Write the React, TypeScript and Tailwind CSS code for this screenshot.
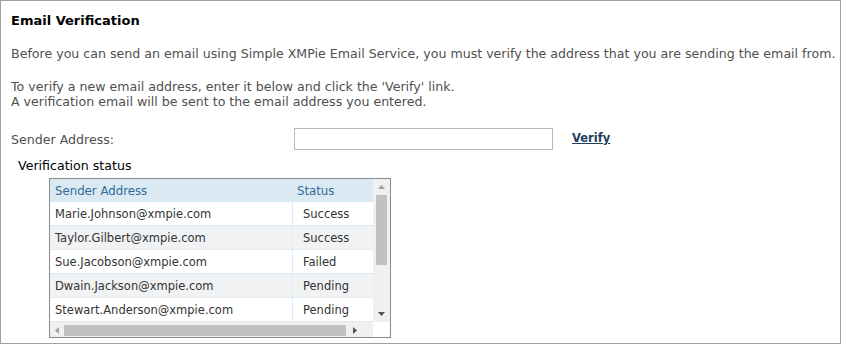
import React from "react"

const rows = [
  { email: "Marie.Johnson@xmpie.com", status: "Success" },
  { email: "Taylor.Gilbert@xmpie.com", status: "Success" },
  { email: "Sue.Jacobson@xmpie.com", status: "Failed" },
  { email: "Dwain.Jackson@xmpie.com", status: "Pending" },
  { email: "Stewart.Anderson@xmpie.com", status: "Pending" },
]

export default function App() {
  return (
    <div className="w-[842px] h-[345px] bg-white font-['DejaVu_Sans',sans-serif]">
      <div className="w-[841px] h-[344px] border border-[#a0a0a0] pl-[10px] pt-[12px] overflow-hidden">
        <h1 className="text-[13px] font-bold text-black leading-[16px]">Email Verification</h1>

        <p className="mt-[17px] text-[12.6px] leading-[16px] text-[#505050]">
          Before you can send an email using Simple XMPie Email Service, you must verify the address that you are sending the email from.
        </p>

        <p className="mt-[17px] text-[12.6px] leading-[15px] text-[#505050]">
          To verify a new email address, enter it below and click the 'Verify' link.
          <br />
          A verification email will be sent to the email address you entered.
        </p>

        <div className="mt-[19px] flex items-center h-[22px]">
          <span className="w-[283px] text-[12.6px] text-[#505050] pt-[2px]">Sender Address:</span>
          <input className="w-[259px] h-[22px] border border-[#b8b8b8] bg-white outline-none" />
          <a className="ml-[19px] text-[11.5px] font-bold text-[#1c3d5c] underline">Verify</a>
        </div>

        <div className="mt-[8px] ml-[7px] text-[12.6px] leading-[16px] text-black">Verification status</div>

        <div className="mt-[4px] ml-[38px] w-[342px] h-[160px] border border-[#8a8a8a] flex">
          <div className="flex flex-col w-[323px] shrink-0">
            <div className="flex h-[23px] shrink-0 items-center pt-[2px] bg-[#dbeaf2] text-[11.75px] text-[#2f6a9c]">
              <span className="w-[243px] pl-[5px]">Sender Address</span>
              <span className="pl-[4px]">Status</span>
            </div>
            {rows.map((r, i) => (
              <div
                key={r.email}
                className={`flex h-[24px] shrink-0 items-center border-b border-[#dcebf5] text-[11.5px] text-[#333] ${
                  i % 2 === 1 ? "bg-[#f0f2f4]" : "bg-white"
                }`}
              >
                <span className="w-[243px] pl-[5px] pt-[3px] h-full flex items-center border-r border-[#dcebf5]">{r.email}</span>
                <span className="pl-[10px] pt-[3px]">{r.status}</span>
              </div>
            ))}
            <div className="h-[15px] shrink-0 flex items-center pt-[2px] bg-[#f0f0f0]">
              <span className="w-[14px] flex justify-center">
                <svg width="4" height="7" viewBox="0 0 4 7"><path d="M4 0 L0 3.5 L4 7Z" fill="#a0a0a0" /></svg>
              </span>
              <div className="w-[282px] h-[11px] bg-[#c1c1c1]" />
              <span className="w-[18px] flex justify-center">
                <svg width="4" height="7" viewBox="0 0 4 7"><path d="M0 0 L4 3.5 L0 7Z" fill="#505050" /></svg>
              </span>
            </div>
          </div>
          <div className="flex flex-col w-[17px] shrink-0 bg-[#f0f0f0]">
            <span className="h-[16px] flex items-center justify-center">
              <svg width="7" height="4" viewBox="0 0 7 4"><path d="M0 4 L3.5 0 L7 4Z" fill="#a0a0a0" /></svg>
            </span>
            <div className="mx-auto w-[11px] h-[70px] bg-[#c1c1c1]" />
            <div className="flex-1" />
            <span className="h-[16px] flex items-center justify-center">
              <svg width="7" height="4" viewBox="0 0 7 4"><path d="M0 0 L3.5 4 L7 0Z" fill="#505050" /></svg>
            </span>
            <div className="h-[15px] bg-white" />
          </div>
        </div>
      </div>
    </div>
  )
}
